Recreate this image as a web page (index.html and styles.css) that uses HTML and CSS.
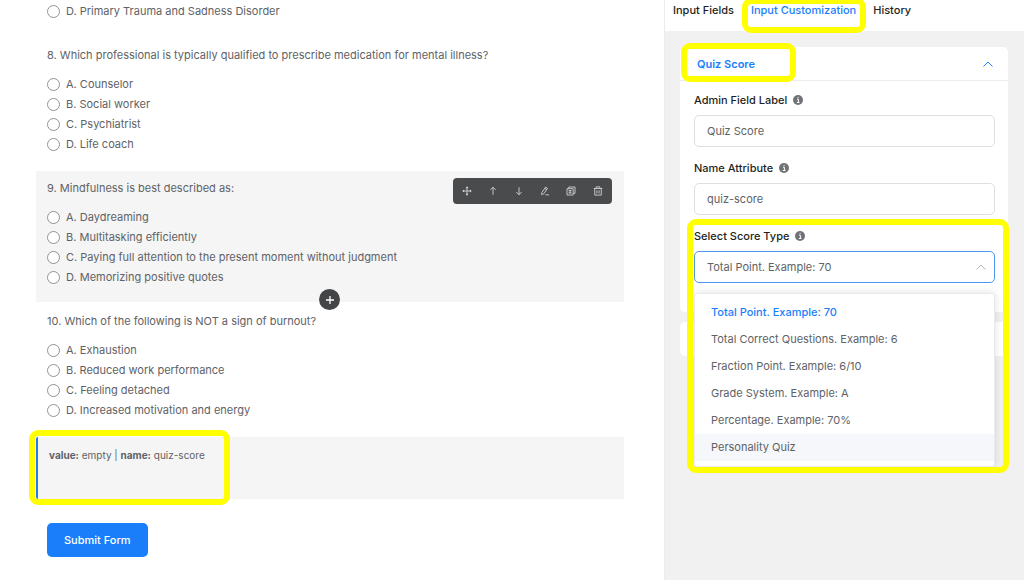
FILE: index.html
```html
<!DOCTYPE html>
<html lang="en">
<head>
<meta charset="utf-8">
<meta name="viewport" content="width=device-width, initial-scale=1">
<title>Form editor</title>
<link rel="stylesheet" href="styles.css">
</head>
<body>
<div class="editor">
  <main class="canvas">
    <form class="form">
      <fieldset class="question question-partial">
        <label class="choice"><input type="radio" name="q7">D. Primary Trauma and Sadness Disorder</label>
      </fieldset>
      <fieldset class="question">
        <legend class="question-title">8. Which professional is typically qualified to prescribe medication for mental illness?</legend>
        <label class="choice"><input type="radio" name="q8">A. Counselor</label>
        <label class="choice"><input type="radio" name="q8">B. Social worker</label>
        <label class="choice"><input type="radio" name="q8">C. Psychiatrist</label>
        <label class="choice"><input type="radio" name="q8">D. Life coach</label>
      </fieldset>
      <fieldset class="question question-active">
        <legend class="question-title">9. Mindfulness is best described as:</legend>
        <label class="choice"><input type="radio" name="q9">A. Daydreaming</label>
        <label class="choice"><input type="radio" name="q9">B. Multitasking efficiently</label>
        <label class="choice"><input type="radio" name="q9">C. Paying full attention to the present moment without judgment</label>
        <label class="choice"><input type="radio" name="q9">D. Memorizing positive quotes</label>
        <div class="toolbar">
          <button type="button" class="tool" aria-label="Move"><svg viewBox="0 0 12 12"><path d="M6 1.5v9M1.5 6h9"/><path class="solid" d="M6 .4 7.7 2.6H4.3zM6 11.6 4.3 9.4h3.4zM.4 6l2.2-1.7v3.4zM11.6 6 9.4 7.7V4.3z"/></svg></button>
          <button type="button" class="tool" aria-label="Move up"><svg viewBox="0 0 12 12"><path d="M6 10.5v-9M2.8 4.7 6 1.5l3.2 3.2"/></svg></button>
          <button type="button" class="tool" aria-label="Move down"><svg viewBox="0 0 12 12"><path d="M6 1.5v9M2.8 7.3 6 10.5l3.2-3.2"/></svg></button>
          <button type="button" class="tool" aria-label="Edit"><svg viewBox="0 0 12 12"><path d="M6.8 1.3 9 2.8 4.6 9.3 2 10.4l.3-2.7zM5.8 2.9 8 4.4M6.5 10.6h4.3"/></svg></button>
          <button type="button" class="tool" aria-label="Duplicate"><svg viewBox="0 0 12 12"><path d="M1.2 3.2h7.4v7.6H1.2zM3.3 3V1.2h7.5v7.6H8.8M3 5.6h3.8M3 8.2h3.8M4.9 5v4"/></svg></button>
          <button type="button" class="tool" aria-label="Delete"><svg viewBox="0 0 12 12"><path d="M.9 3h10.2M3.8 2.8V1h4.4v1.8M2.1 3.2v7.7h7.8V3.2M4.7 5.2v3.7M7.3 5.2v3.7"/></svg></button>
        </div>
        <button type="button" class="add-field" aria-label="Add field"><svg viewBox="0 0 10 10"><path d="M5 1v8M1 5h8"/></svg></button>
      </fieldset>
      <fieldset class="question">
        <legend class="question-title">10. Which of the following is NOT a sign of burnout?</legend>
        <label class="choice"><input type="radio" name="q10">A. Exhaustion</label>
        <label class="choice"><input type="radio" name="q10">B. Reduced work performance</label>
        <label class="choice"><input type="radio" name="q10">C. Feeling detached</label>
        <label class="choice"><input type="radio" name="q10">D. Increased motivation and energy</label>
      </fieldset>
      <div class="hidden-field">
        <b>value:</b> empty | <b>name:</b> quiz-score
        <span class="marker marker-value"></span>
      </div>
      <button type="button" class="submit">Submit Form</button>
    </form>
  </main>

  <aside class="sidebar">
    <nav class="tabs">
      <a class="tab" href="#fields">Input Fields</a>
      <a class="tab tab-active" href="#customization">Input Customization<span class="marker marker-tab"></span></a>
      <a class="tab" href="#history">History</a>
    </nav>
    <div class="panels">
      <section class="panel">
        <button type="button" class="panel-header">
          <span>Quiz Score</span>
          <svg class="chevron" viewBox="0 0 12 12"><path d="M1.5 8.5 6 4l4.5 4.5"/></svg>
          <span class="marker marker-header"></span>
        </button>
        <div class="panel-body">
          <div class="field">
            <div class="field-label"><label for="admin-label">Admin Field Label</label><svg class="info" viewBox="0 0 10 10"><circle cx="5" cy="5" r="5"/><path d="M4 4.2h1.4v3.3M3.8 7.5h2.7M4.6 2.4h1"/></svg></div>
            <input class="control" id="admin-label" type="text" value="Quiz Score">
          </div>
          <div class="field">
            <div class="field-label"><label for="name-attr">Name Attribute</label><svg class="info" viewBox="0 0 10 10"><circle cx="5" cy="5" r="5"/><path d="M4 4.2h1.4v3.3M3.8 7.5h2.7M4.6 2.4h1"/></svg></div>
            <input class="control" id="name-attr" type="text" value="quiz-score">
          </div>
          <div class="field">
            <div class="field-label"><label for="score-type">Select Score Type</label><svg class="info" viewBox="0 0 10 10"><circle cx="5" cy="5" r="5"/><path d="M4 4.2h1.4v3.3M3.8 7.5h2.7M4.6 2.4h1"/></svg></div>
            <div class="select">
              <select class="control control-open" id="score-type">
                <option>Total Point. Example: 70</option>
              </select>
              <svg class="chevron select-chevron" viewBox="0 0 12 12"><path d="M1.5 8.5 6 4l4.5 4.5"/></svg>
              <ul class="menu" role="listbox" aria-label="Score types">
                <li class="menu-item menu-item-selected" role="option" aria-selected="true">Total Point. Example: 70</li>
                <li class="menu-item" role="option">Total Correct Questions. Example: 6</li>
                <li class="menu-item" role="option">Fraction Point. Example: 6/10</li>
                <li class="menu-item" role="option">Grade System. Example: A</li>
                <li class="menu-item" role="option">Percentage. Example: 70%</li>
                <li class="menu-item menu-item-hover" role="option">Personality Quiz</li>
              </ul>
              <span class="marker marker-select"></span>
            </div>
          </div>
        </div>
      </section>
      <section class="panel panel-collapsed"></section>
    </div>
  </aside>
</div>
</body>
</html>
```
FILE: styles.css
```css
* {
  box-sizing: border-box;
}

body {
  margin: 0;
  background: #fff;
  color: #606266;
  font: 11px/16px Inter, "Liberation Sans", sans-serif;
}

button,
input,
select {
  font: inherit;
  color: inherit;
}

svg {
  fill: none;
  stroke: currentColor;
}

.editor {
  display: flex;
  min-height: 100vh;
}

.canvas {
  flex: 1;
  min-width: 0;
  padding: 0 40px 0 36px;
}

.form {
  display: flex;
  flex-direction: column;
  gap: 2px;
}

.question {
  position: relative;
  display: flex;
  flex-direction: column;
  min-width: 0;
  margin: 0;
  padding: 9px 11px 15px;
  border: 0;
}

.question-partial {
  padding-top: 1px;
}

.question-active {
  background: #f5f5f5;
}

.question-title {
  float: left;
  margin-bottom: 11px;
  padding: 0;
}

.choice {
  display: flex;
  align-items: center;
  gap: 6px;
  height: 20px;
}

.choice input {
  appearance: none;
  width: 13px;
  height: 13px;
  margin: 0;
  border: 1px solid #929292;
  border-radius: 50%;
  background: #fff;
}

.toolbar {
  position: absolute;
  top: 7px;
  right: 12px;
  display: flex;
  height: 26px;
  padding-right: 1px;
  border-radius: 4px;
  background: #4a4b4c;
  color: #dcdcdc;
}

.tool {
  display: grid;
  place-items: center;
  width: 26px;
  padding: 0;
  border: 0;
  background: none;
}

.tool:first-child,
.tool:last-child {
  width: 27px;
}

.tool svg {
  width: 10px;
  height: 10px;
}

.tool .solid {
  fill: currentColor;
  stroke: none;
}

.add-field {
  position: absolute;
  bottom: -8px;
  left: 50%;
  display: grid;
  place-items: center;
  width: 21px;
  height: 21px;
  margin-left: -11px;
  padding: 0;
  border: 0;
  border-radius: 50%;
  background: #444546;
  color: #fff;
}

.add-field svg {
  width: 10px;
  height: 10px;
  stroke-width: 1.3;
}

.hidden-field {
  position: relative;
  height: 62px;
  padding: 10px 11px;
  border-left: 2px solid #1a7efb;
  border-radius: 2px 0 0 2px;
  background: #f5f5f5;
  font-size: 10px;
}

.submit {
  align-self: flex-start;
  height: 34px;
  margin: 22px 11px;
  padding: 0 17px;
  border: 0;
  border-radius: 5px;
  background: #1a7efb;
  color: #fff;
  font-weight: 500;
}

.sidebar {
  flex: 0 0 360px;
  border-left: 1px solid #ececec;
  background: #f1f1f1;
}

.tabs {
  display: flex;
  gap: 17px;
  height: 31px;
  padding: 2px 8px;
  background: #fff;
}

.tab {
  position: relative;
  color: #1e1f21;
  font-weight: 500;
  text-decoration: none;
}

.tab-active,
.panel-header {
  color: #1a7efb;
}

.panels {
  display: flex;
  flex-direction: column;
  gap: 10px;
  padding: 16px 16px 0 15px;
}

.panel {
  border-radius: 5px;
  background: #fff;
}

.panel-collapsed {
  height: 34px;
}

.panel-header {
  position: relative;
  display: flex;
  align-items: center;
  justify-content: space-between;
  width: 100%;
  height: 34px;
  padding: 0 14px 0 17px;
  border: 0;
  border-bottom: 1px solid #ececec;
  background: none;
  font-weight: 600;
}

.chevron {
  width: 12px;
  height: 12px;
}

.panel-body {
  display: flex;
  flex-direction: column;
  gap: 13px;
  padding: 11px 13px 29px 14px;
}

.field {
  display: flex;
  flex-direction: column;
  gap: 7px;
}

.field-label {
  display: flex;
  align-items: center;
  gap: 6px;
  color: #1e1f21;
  font-weight: 500;
}

.info {
  width: 10px;
  height: 10px;
  stroke: #fff;
}

.info circle {
  fill: #6f7276;
  stroke: none;
}

.control {
  display: block;
  width: 100%;
  height: 32px;
  padding: 0 12px;
  border: 1px solid #dedfe2;
  border-radius: 5px;
  background: #fff;
}

.control-open {
  appearance: none;
  border-color: #4d97f0;
}

.select {
  position: relative;
}

.select-chevron {
  position: absolute;
  top: 10px;
  right: 8px;
  color: #b4b7bd;
}

.menu {
  position: absolute;
  top: 42px;
  right: 0;
  left: 0;
  z-index: 1;
  margin: 0;
  padding: 5px 0;
  border: 1px solid #e8eaee;
  border-radius: 3px;
  background: #fff;
  box-shadow: 0 0 8px rgba(0, 0, 0, 0.12);
  list-style: none;
}

.menu-item {
  padding: 0 16px;
  line-height: 27px;
}

.menu-item-selected {
  color: #1a7efb;
  font-weight: 500;
}

.menu-item-hover {
  background: #f5f7fa;
}

.marker {
  position: absolute;
  z-index: 2;
  border: 6px solid #ff0;
  border-radius: 9px;
  pointer-events: none;
}

.marker-value {
  top: -7px;
  left: -9px;
  width: 201px;
  height: 75px;
}

.marker-tab {
  inset: -4px -10px -4px -9px;
}

.marker-header {
  top: -4px;
  left: 1px;
  width: 115px;
  height: 39px;
}

.marker-select {
  inset: -32px -14px auto -7px;
  height: 254px;
}
```
